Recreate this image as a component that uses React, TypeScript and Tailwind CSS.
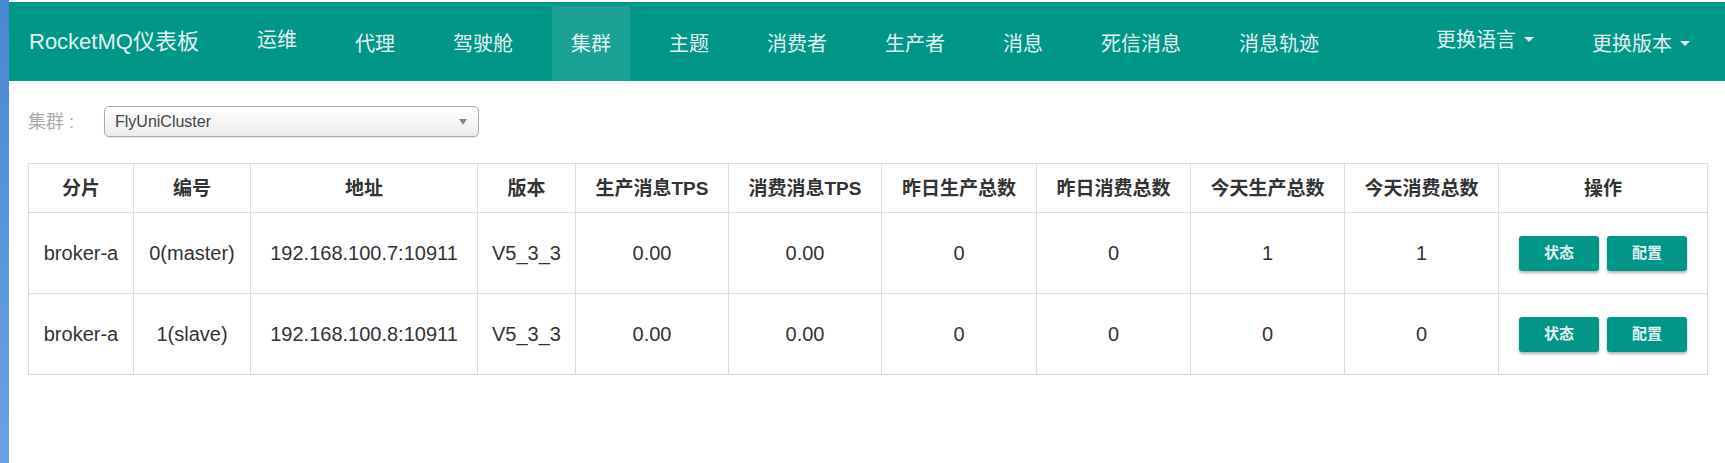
import React from "react";

const FONT = { fontFamily: '"Liberation Sans", Arial, "Noto Sans CJK SC", sans-serif' };

const navItems = [
  { label: "运维", up: true },
  { label: "代理" },
  { label: "驾驶舱" },
  { label: "集群", active: true },
  { label: "主题" },
  { label: "消费者" },
  { label: "生产者" },
  { label: "消息" },
  { label: "死信消息" },
  { label: "消息轨迹" },
];

const headers = [
  "分片",
  "编号",
  "地址",
  "版本",
  "生产消息TPS",
  "消费消息TPS",
  "昨日生产总数",
  "昨日消费总数",
  "今天生产总数",
  "今天消费总数",
  "操作",
];

const colW = [
  "w-[105px]",
  "w-[117px]",
  "w-[227px]",
  "w-[98px]",
  "w-[153px]",
  "w-[153px]",
  "w-[155px]",
  "w-[154px]",
  "w-[154px]",
  "w-[154px]",
  "w-[209px]",
];

const rows = [
  ["broker-a", "0(master)", "192.168.100.7:10911", "V5_3_3", "0.00", "0.00", "0", "0", "1", "1"],
  ["broker-a", "1(slave)", "192.168.100.8:10911", "V5_3_3", "0.00", "0.00", "0", "0", "0", "0"],
];

function Caret() {
  return (
    <span className="ml-[8px] inline-block h-0 w-0 border-x-[5px] border-t-[5px] border-x-transparent border-t-[#e0f2f1] align-middle" />
  );
}

function Btn({ children }: { children: React.ReactNode }) {
  return (
    <button className="flex h-[35px] w-[80px] items-center justify-center rounded-[3px] bg-[#009688] text-[15px] font-bold text-[#e0f2f1] shadow-[0_2px_3px_rgba(0,0,0,0.3)]">
      {children}
    </button>
  );
}

export default function App() {
  return (
    <div style={FONT} className="flex min-h-[463px] w-full bg-white">
      <div className="w-[9px] shrink-0 bg-gradient-to-b from-[#4a87d3] to-[#6aa3e2]" />
      <div className="flex min-w-0 flex-1 flex-col">
        <div className="mt-[2px] flex h-[79px] bg-[#009688] text-[#e0f2f1]">
          <div className="flex items-center pl-[20px] text-[22px] leading-none">RocketMQ仪表板</div>
          <div className="ml-[39px] flex h-full items-end gap-[20px]">
            {navItems.map((n) => (
              <div
                key={n.label}
                className={
                  "flex h-[75px] items-center px-[19px] text-[20px] leading-none " +
                  (n.active ? "bg-[#1aa194]" : "")
                }
              >
                <span className={n.up ? "-translate-y-[4px]" : ""}>{n.label}</span>
              </div>
            ))}
          </div>
          <div className="ml-auto flex h-full items-end gap-[20px] pr-[16px]">
            <div className="flex h-[75px] items-center px-[19px] text-[20px] leading-none">
              <span className="flex -translate-y-[4px] items-center">
                更换语言
                <Caret />
              </span>
            </div>
            <div className="flex h-[75px] items-center px-[19px] text-[20px] leading-none">
              <span className="flex items-center">
                更换版本
                <Caret />
              </span>
            </div>
          </div>
        </div>

        <div className="pl-[19px] pr-[18px]">
          <div className="mt-[25px] flex h-[31px] items-center">
            <span className="w-[76px] text-[18px] leading-none text-[#aaaaaa]">集群 :</span>
            <div className="flex h-[31px] w-[375px] items-center justify-between rounded-[5px] border border-[#aaaaaa] bg-gradient-to-b from-[#ffffff] via-[#f6f6f6] to-[#ececec] pl-[10px] pr-[11px] shadow-[0_1px_1px_rgba(0,0,0,0.1)]">
              <span className="text-[16px] leading-none text-[#444444]">FlyUniCluster</span>
              <span className="inline-block h-0 w-0 border-x-[4px] border-t-[6px] border-x-transparent border-t-[#888888]" />
            </div>
          </div>

          <table className="mt-[26px] w-full table-fixed border-collapse border border-[#dddddd] text-[#333333]">
            <colgroup>
              {colW.map((w, i) => (
                <col key={i} className={w} />
              ))}
            </colgroup>
            <thead>
              <tr>
                {headers.map((h) => (
                  <th
                    key={h}
                    className="h-[49px] border border-[#dddddd] p-0 text-center text-[19px] font-bold leading-none text-[#333333]"
                  >
                    {h}
                  </th>
                ))}
              </tr>
            </thead>
            <tbody>
              {rows.map((r, ri) => (
                <tr key={ri}>
                  {r.map((c, ci) => (
                    <td
                      key={ci}
                      className="h-[81px] border border-[#dddddd] p-0 text-center text-[20px] leading-none"
                    >
                      {c}
                    </td>
                  ))}
                  <td className="h-[81px] border border-[#dddddd] p-0">
                    <div className="flex items-center justify-center gap-[8px]">
                      <Btn>状态</Btn>
                      <Btn>配置</Btn>
                    </div>
                  </td>
                </tr>
              ))}
            </tbody>
          </table>
        </div>
      </div>
    </div>
  );
}
